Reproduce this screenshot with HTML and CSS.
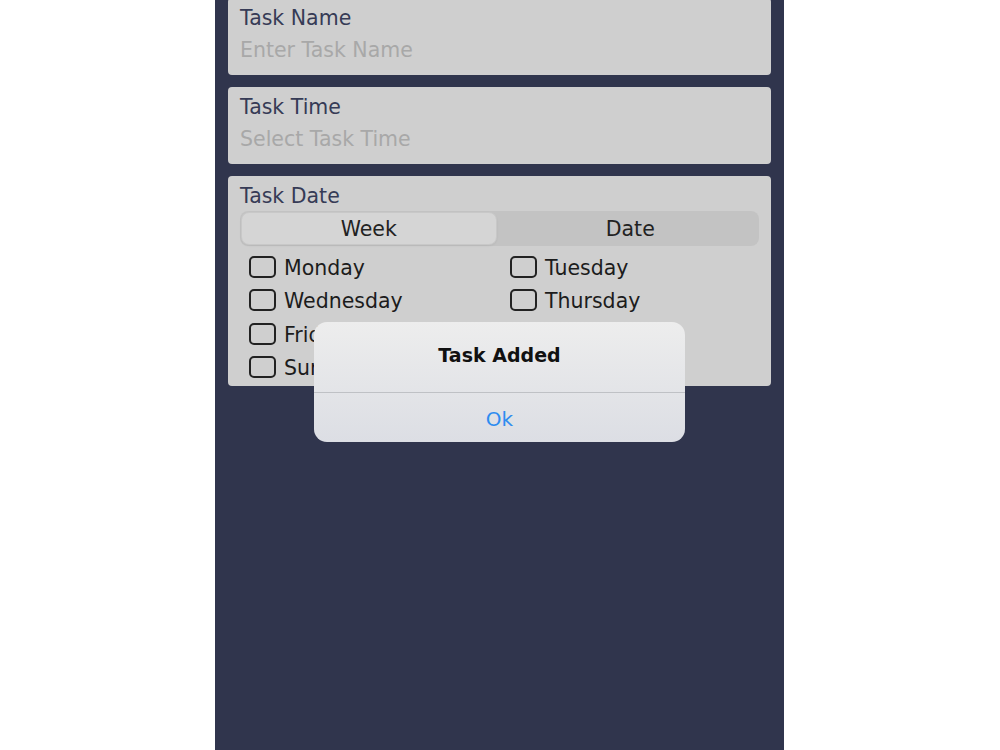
FILE: index.html
```html
<!DOCTYPE html>
<html>
<head>
<meta charset="utf-8">
<link rel="stylesheet" href="styles.css">
</head>
<body>
<div class="page">
  <div class="screen">
    <div class="card card-first">
      <div class="label">Task Name</div>
      <div class="placeholder">Enter Task Name</div>
    </div>
    <div class="card">
      <div class="label">Task Time</div>
      <div class="placeholder">Select Task Time</div>
    </div>
    <div class="card card-date">
      <div class="label">Task Date</div>
      <div class="segmented">
        <div class="seg seg-active">Week</div>
        <div class="seg">Date</div>
      </div>
      <div class="days">
        <div class="day"><span class="box"></span><span class="day-name">Monday</span></div>
        <div class="day"><span class="box"></span><span class="day-name">Tuesday</span></div>
        <div class="day"><span class="box"></span><span class="day-name">Wednesday</span></div>
        <div class="day"><span class="box"></span><span class="day-name">Thursday</span></div>
        <div class="day"><span class="box"></span><span class="day-name">Friday</span></div>
        <div class="day"><span class="box"></span><span class="day-name">Saturday</span></div>
        <div class="day"><span class="box"></span><span class="day-name">Sunday</span></div>
      </div>
    </div>
    <div class="alert">
      <div class="alert-title">Task Added</div>
      <div class="alert-btn">Ok</div>
    </div>
  </div>
</div>
</body>
</html>
```

FILE: styles.css
```css
html, body {
  margin: 0;
  padding: 0;
  background: #ffffff;
}
body {
  font-family: "DejaVu Sans", "Noto Sans", sans-serif;
}
.page {
  display: flex;
  justify-content: flex-start;
  padding-left: 215px;
  width: 1000px;
  height: 750px;
  box-sizing: border-box;
  overflow: hidden;
}
.screen {
  position: relative;
  width: 569px;
  height: 750px;
  background: #30354d;
  padding: 0 13px;
  box-sizing: border-box;
  display: flex;
  flex-direction: column;
  gap: 12px;
}
.card {
  background: #cfcfcf;
  border-radius: 4px;
  padding: 8px 12px 13px;
  height: 77px;
  box-sizing: border-box;
}
.card-first {
  margin-top: -2px;
}
.label {
  font-size: 20.5px;
  line-height: 24px;
  color: #363b56;
}
.placeholder {
  margin-top: 8px;
  font-size: 20.5px;
  line-height: 24px;
  color: #a8a8a8;
}
.card-date {
  height: 210px;
  padding-bottom: 2px;
}
.segmented {
  margin-top: 3px;
  height: 35px;
  background: #c3c3c3;
  border-radius: 8px;
  display: flex;
  padding: 2px;
  box-sizing: border-box;
}
.seg {
  flex: 1;
  display: flex;
  align-items: center;
  justify-content: center;
  font-size: 20.5px;
  color: #222222;
  border-radius: 7px;
}
.seg-active {
  background: #d5d5d5;
  box-shadow: 0 0 0 1px #c8c8c8, 0 1px 3px rgba(0,0,0,0.12);
  margin-right: 8px;
}
.days {
  margin-top: 4px;
  padding-left: 9px;
  display: grid;
  grid-template-columns: 261px 1fr;
  grid-auto-rows: 33.5px;
}
.day {
  display: flex;
  align-items: center;
}
.box {
  width: 27px;
  height: 22px;
  border: 2px solid #222222;
  border-radius: 5px;
  box-sizing: border-box;
  flex-shrink: 0;
}
.day-name {
  margin-left: 8px;
  font-size: 20.5px;
  color: #1c1c1c;
  position: relative;
  top: 1px;
}
.alert {
  position: absolute;
  left: 99px;
  top: 322px;
  width: 371px;
  height: 120px;
  border-radius: 13px;
  overflow: hidden;
  background: linear-gradient(#ededed, #dcdee4);
  display: flex;
  flex-direction: column;
}
.alert-title {
  height: 71px;
  display: flex;
  align-items: center;
  justify-content: center;
  font-size: 19px;
  font-weight: bold;
  color: #111111;
  border-bottom: 1px solid #bfc1c5;
  box-sizing: border-box;
  padding-bottom: 4px;
}
.alert-btn {
  flex: 1;
  display: flex;
  align-items: center;
  justify-content: center;
  font-size: 20px;
  color: #2e8cf0;
  padding-top: 2px;
}
```
